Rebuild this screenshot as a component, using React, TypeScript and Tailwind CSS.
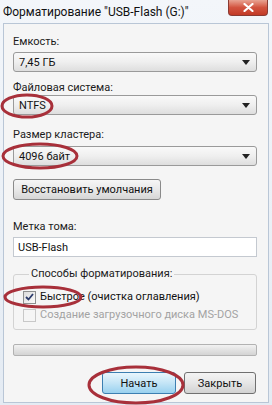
import React from "react";

const font = { fontFamily: 'Roboto, "Liberation Sans", sans-serif' };

function Combo({ value }: { value: string }) {
  return (
    <div className="flex h-[20px] items-center justify-between rounded-[3px] border border-[#9a9a9a] bg-gradient-to-b from-[#f9f9f9] via-[#efefef] to-[#dedede] pl-[5px] pr-[6px] text-[11px] leading-none text-[#111]">
      <span>{value}</span>
      <svg width="8" height="5" viewBox="0 0 8 5">
        <path d="M0 0h8L4 5z" fill="#222" />
      </svg>
    </div>
  );
}

function Label({ text, className = "" }: { text: string; className?: string }) {
  return <div className={`text-[11px] leading-[14px] text-[#1b1b1b] ${className}`}>{text}</div>;
}

export default function App() {
  return (
    <div className="relative h-[405px] w-[272px] overflow-hidden bg-gradient-to-b from-[#f3f6fa] to-[#e4ebf3]" style={font}>
      {/* title bar */}
      <div className="flex h-[23px] items-start pl-[3px] pt-[4px] text-[12px] leading-[16px] text-[#111]">
        Форматирование "USB-Flash (G:)"
      </div>
      <div className="absolute right-[4px] top-0 flex h-[16px] w-[40px] items-center justify-center rounded-b-[4px] border border-t-0 border-[#8a3a32] bg-gradient-to-b from-[#e8a393] via-[#d2533f] to-[#c23a26]">
        <svg width="11" height="9" viewBox="0 0 11 9">
          <path d="M1.5 1l8 7M9.5 1l-8 7" stroke="#fff" strokeWidth="2.2" strokeLinecap="round" />
        </svg>
      </div>

      {/* client area */}
      <div className="mx-[3px] flex h-[380px] flex-col border border-[#b9c6d6] bg-[#f5f5f5] pl-[9px] pr-[11px]">
        <Label text="Емкость:" className="mt-[11px]" />
        <div className="mt-[3px]">
          <Combo value="7,45 ГБ" />
        </div>
        <Label text="Файловая система:" className="mt-[9px]" />
        <Combo value="NTFS" />
        <Label text="Размер кластера:" className="mt-[13px]" />
        <div className="mt-[4px]">
          <Combo value="4096 байт" />
        </div>
        <div className="mt-[13px] flex">
          <div className="flex h-[21px] w-[148px] items-center justify-center rounded-[3px] border border-[#8a8a8a] bg-gradient-to-b from-[#f6f6f6] via-[#e9e9e9] to-[#d6d6d6] text-[11px] leading-none text-[#111]">
            Восстановить умолчания
          </div>
        </div>
        <Label text="Метка тома:" className="mt-[20px]" />
        <div className="mt-[3px] flex h-[20px] items-center border border-[#c4c9d0] bg-white pl-[4px] text-[11px] leading-none text-[#111]">
          USB-Flash
        </div>

        <fieldset className="mt-[10px] rounded-[3px] border border-[#d3d3d3] pb-[7px] pl-[9px]">
          <legend className="ml-[6px] px-[2px] text-[11px] leading-[14px] text-[#1b1b1b]">Способы форматирования:</legend>
          <div className="mt-[9px] flex items-center gap-[4px] text-[11px] leading-[14px] text-[#111]">
            <div className="flex h-[13px] w-[13px] items-center justify-center border border-[#8e8f8f] bg-gradient-to-br from-[#dcdcdc] to-[#fbfbfb]">
              <svg width="9" height="8" viewBox="0 0 9 8">
                <path d="M1 4l2.5 2.5L8 1" stroke="#2c3b6b" strokeWidth="1.8" fill="none" />
              </svg>
            </div>
            Быстрое (очистка оглавления)
          </div>
          <div className="mt-[4px] flex items-center gap-[4px] whitespace-nowrap text-[11px] leading-[14px] text-[#a3a3a3]">
            <div className="h-[13px] w-[13px] border border-[#c8c8c8] bg-[#f5f5f5]" />
            Создание загрузочного диска MS-DOS
          </div>
        </fieldset>

        <div className="mt-[14px] h-[12px] rounded-[2px] border border-[#b2b2b2] bg-gradient-to-b from-[#f2f2f2] via-[#e2e2e2] to-[#d4d4d4]" />

        <div className="mt-[16px] flex justify-end gap-[8px] pr-[1px]">
          <div className="flex h-[22px] w-[74px] items-center justify-center rounded-[3px] border border-[#3c7fb1] bg-gradient-to-b from-[#e9f6fd] via-[#c4e5f6] to-[#98d1ef] text-[11px] leading-none text-[#111]">
            Начать
          </div>
          <div className="flex h-[22px] w-[72px] items-center justify-center rounded-[3px] border border-[#707070] bg-gradient-to-b from-[#f4f4f4] via-[#e6e6e6] to-[#d2d2d2] text-[11px] leading-none text-[#111]">
            Закрыть
          </div>
        </div>
      </div>

      {/* red annotation ellipses */}
      <svg className="pointer-events-none absolute inset-0" width="272" height="405">
        <g fill="none" stroke="#a8303a" strokeWidth="3">
          <ellipse cx="27" cy="106" rx="25" ry="11" />
          <ellipse cx="40" cy="156" rx="37" ry="12" />
          <ellipse cx="43" cy="297" rx="38" ry="10" />
          <ellipse cx="136" cy="385" rx="47" ry="18" />
        </g>
      </svg>
    </div>
  );
}
